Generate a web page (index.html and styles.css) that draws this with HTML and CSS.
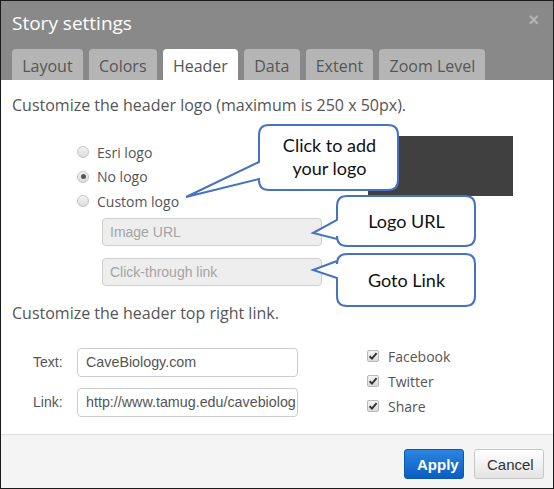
FILE: index.html
```html
<!DOCTYPE html>
<html>
<head>
<meta charset="utf-8">
<link rel="stylesheet" href="styles.css">
</head>
<body>
<div class="dialog">
  <div class="header">
    <div class="title-row">
      <div class="title">Story settings</div>
      <div class="close">×</div>
    </div>
    <div class="tabs">
      <div class="tab">Layout</div>
      <div class="tab">Colors</div>
      <div class="tab active">Header</div>
      <div class="tab">Data</div>
      <div class="tab">Extent</div>
      <div class="tab">Zoom Level</div>
    </div>
  </div>
  <div class="content">
    <p class="desc">Customize the header logo (maximum is 250 x 50px).</p>
    <div class="logo-row">
      <div class="logo-options">
        <label class="radio-row"><span class="radio"></span>Esri logo</label>
        <label class="radio-row"><span class="radio checked"></span>No logo</label>
        <label class="radio-row"><span class="radio"></span>Custom logo</label>
        <div class="ph-input first">Image URL</div>
        <div class="ph-input">Click-through link</div>
      </div>
      <div class="preview"></div>
    </div>
    <p class="desc second">Customize the header top right link.</p>
    <div class="link-row">
      <div class="link-form">
        <div class="form-row"><span class="flabel">Text:</span><div class="txt-input"><span class="val">CaveBiology.com</span></div></div>
        <div class="form-row"><span class="flabel">Link:</span><div class="txt-input"><span class="val">http://www.tamug.edu/cavebiology</span></div></div>
      </div>
      <div class="checks">
        <div class="check-row"><span class="cb"><svg viewBox="0 0 12 12" width="12" height="12"><path d="M2.6 6.2 L5 8.6 L9.6 3.2" fill="none" stroke="#333" stroke-width="2"/></svg></span>Facebook</div>
        <div class="check-row"><span class="cb"><svg viewBox="0 0 12 12" width="12" height="12"><path d="M2.6 6.2 L5 8.6 L9.6 3.2" fill="none" stroke="#333" stroke-width="2"/></svg></span>Twitter</div>
        <div class="check-row"><span class="cb"><svg viewBox="0 0 12 12" width="12" height="12"><path d="M2.6 6.2 L5 8.6 L9.6 3.2" fill="none" stroke="#333" stroke-width="2"/></svg></span>Share</div>
      </div>
    </div>
  </div>
  <div class="footer">
    <button class="btn apply">Apply</button>
    <button class="btn cancel">Cancel</button>
  </div>

  <svg class="callouts" width="554" height="489" viewBox="0 0 554 489">
    <path d="M269,125 H388 Q398,125 398,135 V180 Q398,190 388,190 H269 Q259,190 259,180 V179 L186,197 L259,162 V135 Q259,125 269,125 Z" fill="#fff" stroke="#4472c4" stroke-width="2"/>
    <path d="M347,196 H465 Q475,196 475,206 V236 Q475,246 465,246 H347 Q337,246 337,236 V239 L313,233 L337,220 V206 Q337,196 347,196 Z" fill="#fff" stroke="#4472c4" stroke-width="2"/>
    <path d="M347,254 H465 Q475,254 475,264 V296 Q475,306 465,306 H347 Q337,306 337,296 V278 L313,270 L337,261 V264 Q337,254 347,254 Z" fill="#fff" stroke="#4472c4" stroke-width="2"/>
  </svg>
  <div class="callout-text c1">Click to add<br>your logo</div>
  <div class="callout-text c2">Logo URL</div>
  <div class="callout-text c3">Goto Link</div>
</div>
</body>
</html>
```
FILE: styles.css
```css
* { box-sizing: border-box; }
html, body { margin: 0; padding: 0; background: #fff; }
body { font-family: "Open Sans", "Liberation Sans", sans-serif; }

.dialog {
  position: relative;
  width: 554px;
  height: 489px;
  border: 1px solid #1a1a1a;
  display: flex;
  flex-direction: column;
  background: #fff;
  overflow: hidden;
}

.header {
  background: #898989;
  padding: 0 0 0 11px;
}
.title-row {
  height: 48px;
  display: flex;
  justify-content: space-between;
  align-items: flex-start;
}
.title {
  color: #fff;
  font-size: 19px;
  padding-top: 9px;
}
.close {
  color: #b4b4b4;
  font-size: 18px;
  font-family: "Liberation Sans", sans-serif;
  padding: 9px 14px 0 0;
  font-weight: bold;
}
.tabs {
  display: flex;
  gap: 6px;
  height: 31px;
}
.tab {
  background: #b5b5b5;
  color: #555;
  font-size: 16px;
  padding: 6px 10.2px 0;
  border-radius: 4px 4px 0 0;
}
.tab.active { background: #fff; }

.content {
  flex: 1;
  padding: 14px 12px 0 11px;
  color: #555;
}
.desc {
  margin: 0;
  font-size: 16px;
  line-height: 22px;
}
.desc.second { margin-top: 16px; }

.logo-row {
  display: flex;
  margin-top: 20px;
  padding-left: 65px;
}
.logo-options {
  width: 291px;
  padding-top: 4px;
}
.radio-row {
  display: flex;
  align-items: center;
  height: 24.5px;
  font-size: 14px;
}
.radio {
  width: 12px;
  height: 12px;
  border-radius: 50%;
  border: 1px solid #c4c4c4;
  background: linear-gradient(#f4f4f4, #dcdcdc);
  margin-right: 8px;
  position: relative;
}
.radio.checked::after {
  content: "";
  position: absolute;
  left: 2.5px;
  top: 2.5px;
  width: 5px;
  height: 5px;
  border-radius: 50%;
  background: #555;
}
.ph-input {
  margin-left: 25px;
  width: 220px;
  height: 28px;
  border: 1px solid #d0d0d0;
  border-radius: 4px;
  background: #eee;
  color: #a4a4a4;
  font-family: "Liberation Sans", Arial, sans-serif;
  font-size: 14px;
  line-height: 26px;
  padding-left: 7px;
  margin-top: 12px;
}
.ph-input.first { margin-top: 4px; }

.preview {
  width: 145px;
  height: 60px;
  background: #404040;
}

.link-row {
  display: flex;
  margin-top: 20px;
}
.link-form {
  width: 355px;
  padding-left: 21px;
  padding-top: 4px;
}
.form-row {
  display: flex;
  align-items: center;
  margin-bottom: 11px;
}
.flabel {
  width: 44px;
  font-family: "Liberation Sans", Arial, sans-serif;
  font-size: 14px;
  color: #555;
}
.txt-input {
  width: 221px;
  height: 29px;
  border: 1px solid #ccc;
  border-radius: 4px;
  background: #fff;
  font-family: "Liberation Sans", Arial, sans-serif;
  font-size: 14.3px;
  color: #555;
  line-height: 27px;
  padding: 0 2px 0 8px;
}
.val {
  display: block;
  overflow: hidden;
  white-space: nowrap;
}
.checks { padding-top: 0; }
.check-row {
  display: flex;
  align-items: center;
  height: 25px;
  font-size: 14px;
}
.cb {
  width: 12px;
  height: 12px;
  border: 1px solid #b8b8b8;
  border-radius: 2px;
  background: linear-gradient(#f4f4f4, #dadada);
  margin-right: 9px;
  display: flex;
}
.cb svg { margin: -1px; }

.footer {
  height: 54px;
  border-top: 1px solid #dedede;
  background: #f4f4f4;
  display: flex;
  justify-content: flex-end;
  align-items: flex-start;
  padding: 14px 9px 0 0;
  gap: 10px;
}
.btn {
  height: 30px;
  border-radius: 3px;
  font-family: "Liberation Sans", Arial, sans-serif;
  font-size: 15px;
  padding: 0 12px;
  cursor: pointer;
}
.apply {
  width: 60px;
  background: linear-gradient(#2b85e0, #0a5ec2);
  border: 1px solid #0b58b0;
  color: #fff;
  font-weight: bold;
}
.cancel {
  width: 70px;
  background: linear-gradient(#fff, #e4e4e4);
  border: 1px solid #c8c8c8;
  color: #333;
}

.callouts {
  position: absolute;
  left: -1px;
  top: -1px;
  pointer-events: none;
}
.callout-text {
  position: absolute;
  font-family: Lato, "Open Sans", sans-serif;
  font-size: 18px;
  line-height: 23px;
  color: #111;
  text-align: center;
}
.c1 { left: 259px; top: 133px; width: 139px; }
.c2 { left: 336px; top: 209px; width: 139px; }
.c3 { left: 336px; top: 268px; width: 139px; }
```
